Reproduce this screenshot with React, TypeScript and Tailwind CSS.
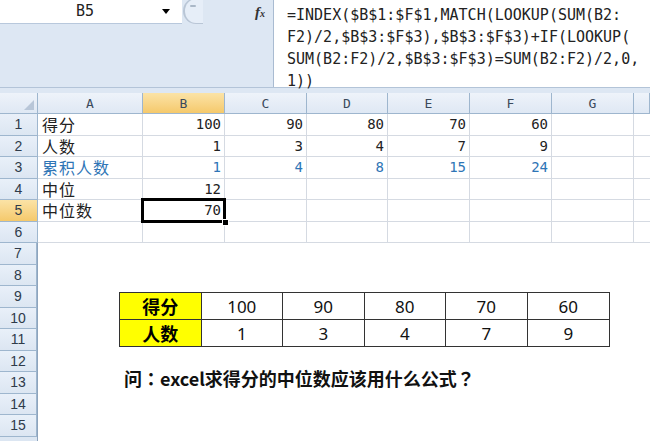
import React from "react";

const COLS = "grid-cols-[38px_105px_82px_82px_81px_82px_82px_82px_16px]";
const mono = { fontFamily: '"DejaVu Sans Mono", "Liberation Mono", monospace' };
const cjk = { fontFamily: '"Noto Sans CJK SC", "Noto Sans", sans-serif' };
const cjkTC = { fontFamily: '"Noto Sans CJK TC", "Noto Sans CJK SC", sans-serif' };

type Row = { label: string; vals: string[]; blue?: boolean };
const rows: Row[] = [
  { label: "得分", vals: ["100", "90", "80", "70", "60"] },
  { label: "人数", vals: ["1", "3", "4", "7", "9"] },
  { label: "累积人数", vals: ["1", "4", "8", "15", "24"], blue: true },
  { label: "中位", vals: ["12", "", "", "", ""] },
  { label: "中位数", vals: ["70", "", "", "", ""] },
  { label: "", vals: ["", "", "", "", ""] },
];

const headers = ["A", "B", "C", "D", "E", "F", "G", ""];

function ColHeader({ l, sel }: { l: string; sel?: boolean }) {
  return (
    <div
      className={`h-[21px] flex items-center justify-center border-r border-b border-[#9eb6ce] text-[13px] leading-none text-[#3b4a5c] ${
        sel ? "bg-gradient-to-b from-[#fbe3a6] to-[#f5c96b]" : "bg-gradient-to-b from-[#eef3fa] to-[#dfe8f4]"
      }`}
      style={mono}
    >
      {l}
    </div>
  );
}

function RowHeader({ n, sel }: { n: number; sel?: boolean }) {
  return (
    <div
      className={`h-[21.5px] flex items-center justify-center border-r border-b border-[#9eb6ce] text-[14px] leading-none text-[#2f3b4a] ${
        sel ? "bg-gradient-to-b from-[#fbe3a6] to-[#f5c96b]" : "bg-gradient-to-b from-[#e9f0f9] to-[#dce6f2]"
      }`}
      style={{ fontFamily: '"Liberation Sans", Arial, sans-serif' }}
    >
      {n}
    </div>
  );
}

export default function App() {
  const tableTop = ["100", "90", "80", "70", "60"];
  const tableBot = ["1", "3", "4", "7", "9"];
  return (
    <div className="w-[650px] h-[441px] overflow-hidden bg-white relative">
      {/* Formula bar */}
      <div className="flex h-[88px] bg-[#dde7f3] border-b border-[#b3c4d8]">
        <div className="w-[273px] flex flex-col">
          <div className="flex h-[24px] items-stretch">
            <div className="w-[182px] bg-white border-b border-[#b8c8dc] flex items-center">
              <div className="w-[162px] text-center text-[15px] leading-none text-[#222] pl-[8px]" style={mono}>
                B5
              </div>
              <div className="w-0 h-0 border-l-[4px] border-r-[4px] border-t-[5px] border-l-transparent border-r-transparent border-t-black" />
            </div>
            <div className="relative w-[16px] h-[24px]">
              <div className="absolute left-[1px] top-[-2px] w-[20px] h-[26px] rounded-l-full border-l-2 border-t border-b border-[#b9c6d6] bg-[#e6eef8]" />
              <div className="absolute left-[8px] top-[5px] w-[6px] h-[2px] bg-[#aab8c8] rounded" />
            </div>
            <div className="flex-1 flex items-center justify-end pr-[8px]">
              <span
                className="italic font-bold text-[15px] text-[#333] leading-none"
                style={{ fontFamily: '"Liberation Serif", serif' }}
              >
                f<span className="text-[10px]">x</span>
              </span>
            </div>
          </div>
        </div>
        <div className="flex-1 bg-white border-l border-[#a9bbd1] pl-[13px] pt-[4px] text-[15px] leading-[22px] text-[#222]" style={mono}>
          <div className="whitespace-pre">=INDEX($B$1:$F$1,MATCH(LOOKUP(SUM(B2:</div>
          <div className="whitespace-pre">F2)/2,$B$3:$F$3),$B$3:$F$3)+IF(LOOKUP(</div>
          <div className="whitespace-pre">SUM(B2:F2)/2,$B$3:$F$3)=SUM(B2:F2)/2,0,</div>
          <div className="whitespace-pre">1))</div>
        </div>
      </div>
      <div className="h-[5px] bg-[#dde7f3]" />

      {/* Grid */}
      <div className={`grid ${COLS}`}>
        <div className="h-[21px] relative border-r border-b border-[#9eb6ce] bg-gradient-to-b from-[#eef3fa] to-[#dfe8f4]">
          <div
            className="absolute right-[3px] bottom-[3px] w-0 h-0"
            style={{ borderBottom: "10px solid #b8c6d8", borderLeft: "10px solid transparent" }}
          />
        </div>
        {headers.map((h, i) => (
          <ColHeader key={i} l={h} sel={h === "B"} />
        ))}

        {rows.map((r, ri) => (
          <React.Fragment key={ri}>
            <RowHeader n={ri + 1} sel={ri === 4} />
            <div
              className={`h-[21.5px] border-r border-b border-[#d5dae2] flex items-center pl-[4px] text-[16px] leading-none tracking-[1px] ${
                r.blue ? "text-[#2e75b6]" : "text-[#222]"
              }`}
              style={cjk}
            >
              {r.label}
            </div>
            {r.vals.map((v, vi) => (
              <div
                key={vi}
                className={`h-[21.5px] border-r border-b border-[#d5dae2] flex items-center justify-end pr-[3px] text-[14px] leading-none ${
                  r.blue ? "text-[#2e75b6]" : "text-[#222]"
                } ${ri === 4 && vi === 0 ? "relative" : ""}`}
                style={mono}
              >
                {v}
                {ri === 4 && vi === 0 && (
                  <>
                    <div className="absolute z-10 left-[-2px] top-[-2px] right-[-2px] bottom-[-2px] border-[3px] border-black" />
                    <div className="absolute z-20 right-[-5px] bottom-[-5px] w-[7px] h-[7px] bg-black border border-white" />
                  </>
                )}
              </div>
            ))}
            <div className="h-[21.5px] border-r border-b border-[#d5dae2]" />
            <div className="h-[21.5px] border-b border-[#d5dae2]" />
          </React.Fragment>
        ))}
      </div>

      {/* Lower area with picture */}
      <div className="flex">
        <div className="w-[38px] flex flex-col border-r border-[#8ea4bd]">
          {[7, 8, 9, 10, 11, 12, 13, 14, 15].map((n) => (
            <RowHeader key={n} n={n} />
          ))}
          <div className="h-[4px] bg-[#dce6f2]" />
        </div>
        <div className="flex-1 bg-white pl-[81px] pt-[49px]">
          <div className="w-[491px] border border-[#333]">
            <div className="flex h-[27px] border-b border-[#333]">
              <div className="w-[82px] bg-[#ffff00] border-r border-[#333] flex items-center justify-center font-bold text-[18px] leading-none text-black" style={cjk}>
                得分
              </div>
              {tableTop.map((v, i) => (
                <div
                  key={i}
                  className={`w-[82px] flex items-center justify-center text-[17px] leading-none text-[#111] ${i < 4 ? "border-r border-[#333]" : ""}`}
                  style={{ fontFamily: '"Noto Sans", sans-serif' }}
                >
                  {v}
                </div>
              ))}
            </div>
            <div className="flex h-[26px]">
              <div className="w-[82px] bg-[#ffff00] border-r border-[#333] flex items-center justify-center font-bold text-[18px] leading-none text-black" style={cjk}>
                人数
              </div>
              {tableBot.map((v, i) => (
                <div
                  key={i}
                  className={`w-[82px] flex items-center justify-center text-[17px] leading-none text-[#111] ${i < 4 ? "border-r border-[#333]" : ""}`}
                  style={{ fontFamily: '"Noto Sans", sans-serif' }}
                >
                  {v}
                </div>
              ))}
            </div>
          </div>
          <div className="mt-[22px] ml-[5px] font-bold text-[18px] leading-none text-[#111]" style={cjk}>
            问<span style={cjkTC}>：</span>excel求得分的中位数应该用什么公式<span style={cjkTC}>？</span>
          </div>
        </div>
      </div>
    </div>
  );
}
